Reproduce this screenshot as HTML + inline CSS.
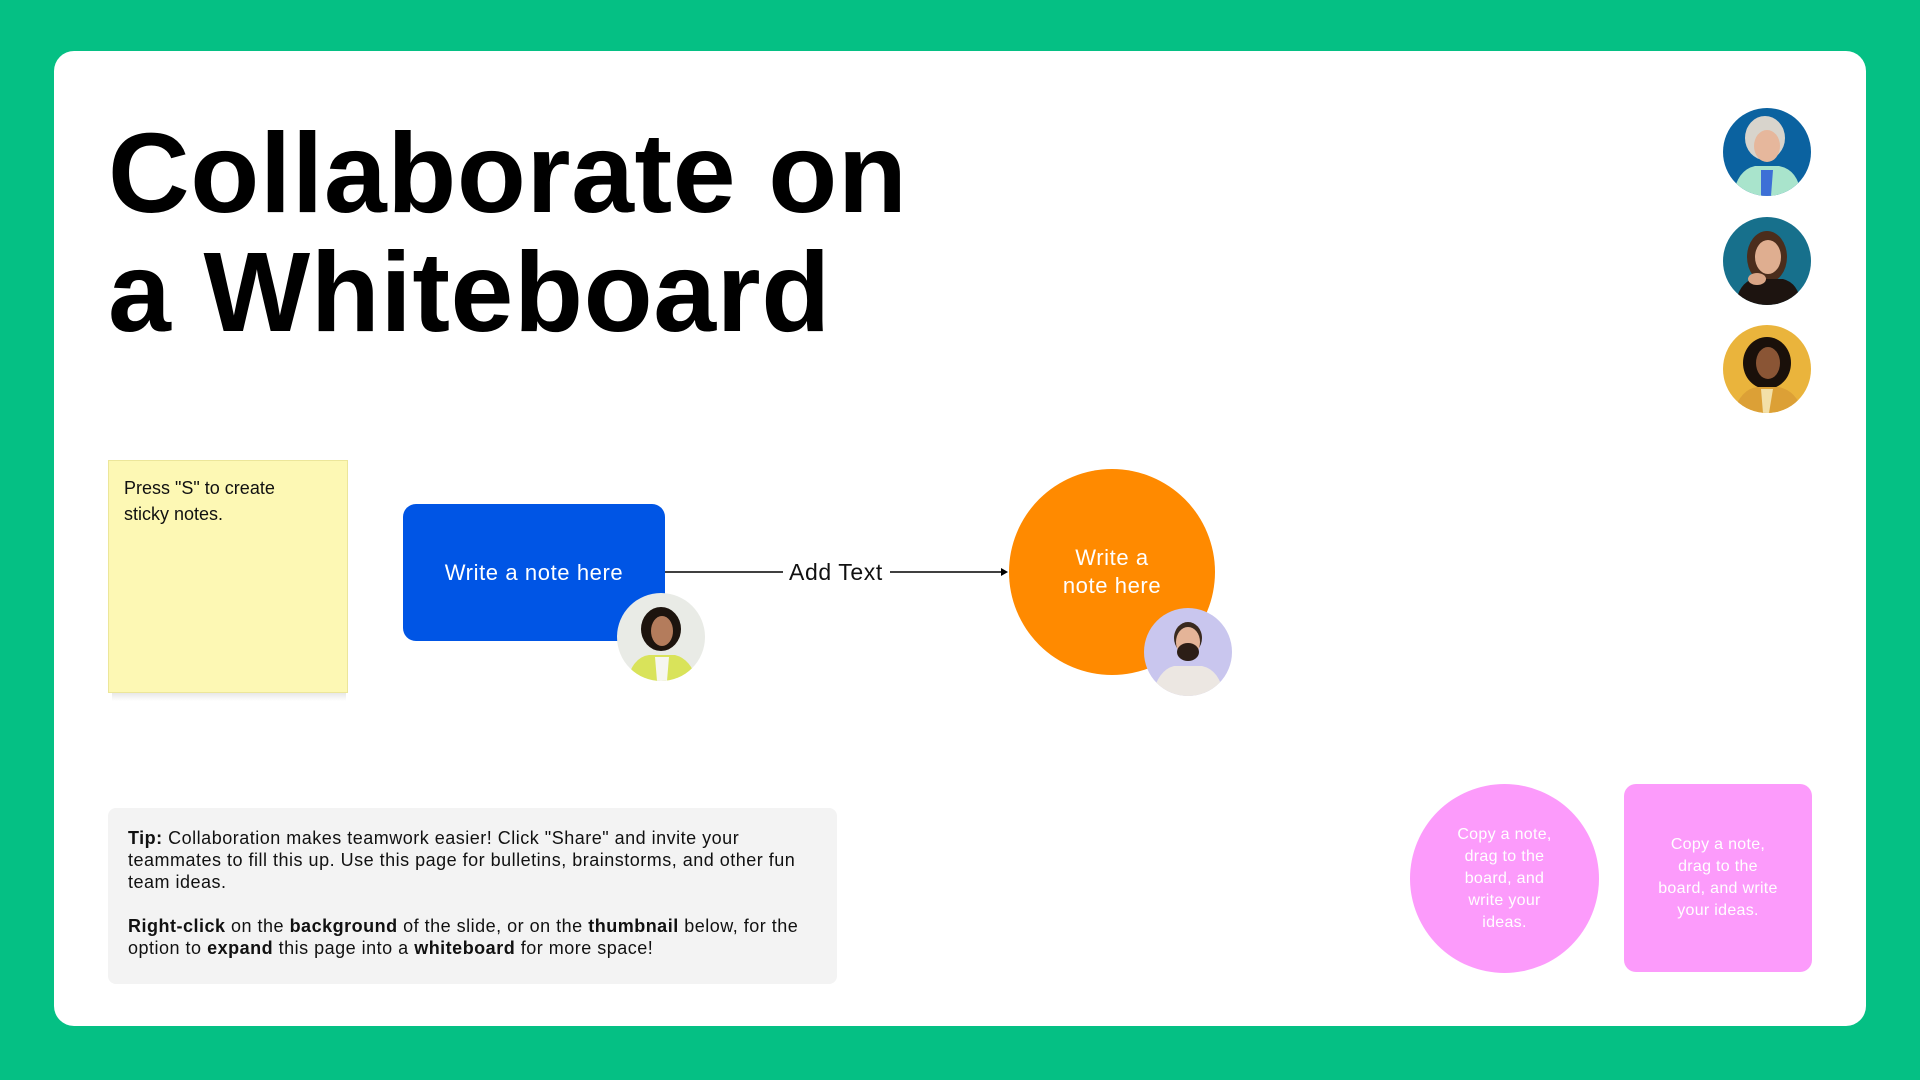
<!DOCTYPE html>
<html><head><meta charset="utf-8"><style>
*{margin:0;padding:0;box-sizing:border-box}
body{width:1920px;height:1080px;background:#05c084;position:relative;overflow:hidden;font-family:"Liberation Sans",sans-serif}
.card{position:absolute;left:54px;top:51px;width:1812px;height:975px;background:#fff;border-radius:20px}
.title{position:absolute;left:108px;top:114px;font-size:113px;font-weight:bold;line-height:119px;letter-spacing:0.6px;color:#000}
.av{position:absolute;border-radius:50%;overflow:hidden}
.sticky{position:absolute;left:108px;top:460px;width:240px;height:233px;background:#fdf8b4;border:1px solid #ece69a;font-size:18px;line-height:26px;padding:14px 15px;color:#111}
.shadow{position:absolute;left:112px;top:693px;width:234px;height:8px;background:linear-gradient(#e8e8e8,#fff)}
.blue{position:absolute;left:403px;top:504px;width:262px;height:137px;background:#0055e5;border-radius:13px;color:#fff;font-size:22px;letter-spacing:0.6px;display:flex;align-items:center;justify-content:center}
.orange{position:absolute;left:1009px;top:469px;width:206px;height:206px;border-radius:50%;background:#ff8a00;color:#fff;font-size:22px;letter-spacing:0.6px;line-height:28px;display:flex;align-items:center;justify-content:center;text-align:center}
.tip{position:absolute;left:108px;top:808px;width:729px;height:176px;background:#f3f3f3;border-radius:8px;padding:19px 30px 19px 20px;font-size:18px;letter-spacing:0.5px;line-height:22px;color:#111}
.pinkc{position:absolute;left:1410px;top:784px;width:189px;height:189px;border-radius:50%;background:#fc9bfb;color:#fff;font-size:16px;line-height:22px;letter-spacing:0.3px;display:flex;align-items:center;justify-content:center;text-align:center}
.pinkr{position:absolute;left:1624px;top:784px;width:188px;height:188px;border-radius:12px;background:#fc9bfb;color:#fff;font-size:16px;line-height:22px;letter-spacing:0.3px;display:flex;align-items:center;justify-content:center;text-align:center}
</style></head><body>
<div class="card"></div>
<div class="title">Collaborate on<br>a Whiteboard</div>

<svg class="av" style="left:1723px;top:108px" width="88" height="88" viewBox="0 0 88 88"><rect width="88" height="88" fill="#0b62a0"/><ellipse cx="42" cy="30" rx="20" ry="22" fill="#d8d4cc"/><ellipse cx="44" cy="38" rx="13" ry="16" fill="#e6b79c"/><path d="M10 88 Q14 62 32 58 L56 58 Q76 62 78 88Z" fill="#a9e4cc"/><path d="M38 62 L50 62 L48 88 L38 88Z" fill="#3d6fd6"/></svg>
<svg class="av" style="left:1723px;top:217px" width="88" height="88" viewBox="0 0 88 88"><rect width="88" height="88" fill="#17708c"/><ellipse cx="44" cy="40" rx="20" ry="26" fill="#4b2d1c"/><ellipse cx="45" cy="40" rx="13" ry="17" fill="#dfae90"/><path d="M12 88 Q16 66 30 62 L60 62 Q76 66 78 88Z" fill="#1d1410"/><ellipse cx="34" cy="62" rx="9" ry="6" fill="#d9a586"/></svg>
<svg class="av" style="left:1723px;top:325px" width="88" height="88" viewBox="0 0 88 88"><rect width="88" height="88" fill="#eab43c"/><ellipse cx="44" cy="38" rx="24" ry="26" fill="#1a100a"/><ellipse cx="45" cy="38" rx="12" ry="16" fill="#8a5535"/><path d="M10 88 Q18 64 34 62 L56 62 Q74 66 80 88Z" fill="#dca036"/><path d="M38 64 L50 64 L46 88 L40 88Z" fill="#f3e0a8"/></svg>

<div class="sticky">Press "S" to create<br>sticky notes.</div>
<div class="shadow"></div>

<div class="blue">Write a note here</div>
<svg class="av" style="left:617px;top:593px" width="88" height="88" viewBox="0 0 88 88"><rect width="88" height="88" fill="#e9ebe6"/><ellipse cx="44" cy="36" rx="20" ry="22" fill="#1d140e"/><ellipse cx="45" cy="38" rx="11" ry="15" fill="#b47c5c"/><path d="M10 88 Q16 64 32 62 L58 62 Q74 66 80 88Z" fill="#d9e35a"/><path d="M38 64 L52 64 L50 88 L40 88Z" fill="#f6f6f0"/></svg>

<svg style="position:absolute;left:665px;top:560px" width="350" height="24"><line x1="0" y1="12" x2="118" y2="12" stroke="#000" stroke-width="1.5"/><line x1="225" y1="12" x2="341" y2="12" stroke="#000" stroke-width="1.5"/><path d="M336 8 L343 12 L336 16Z" fill="#000"/></svg>
<div style="position:absolute;left:789px;top:559px;font-size:23px;letter-spacing:0.6px;line-height:26px;color:#111">Add Text</div>

<div class="orange">Write a<br>note here</div>
<svg class="av" style="left:1144px;top:608px" width="88" height="88" viewBox="0 0 88 88"><rect width="88" height="88" fill="#c9c6ee"/><ellipse cx="44" cy="30" rx="14" ry="16" fill="#3a2a1f"/><ellipse cx="44" cy="34" rx="12" ry="15" fill="#e4b498"/><ellipse cx="44" cy="44" rx="11" ry="9" fill="#2c1e16"/><path d="M8 88 Q14 62 30 58 L58 58 Q76 62 80 88Z" fill="#ece7e2"/></svg>

<div class="tip"><b>Tip:</b> Collaboration makes teamwork easier! Click "Share" and invite your teammates to fill this up. Use this page for bulletins, brainstorms, and other fun team ideas.<br><br><b>Right-click</b> on the <b>background</b> of the slide, or on the <b>thumbnail</b> below, for the option to <b>expand</b> this page into a <b>whiteboard</b> for more space!</div>

<div class="pinkc">Copy a note,<br>drag to the<br>board, and<br>write your<br>ideas.</div>
<div class="pinkr">Copy a note,<br>drag to the<br>board, and write<br>your ideas.</div>
</body></html>
